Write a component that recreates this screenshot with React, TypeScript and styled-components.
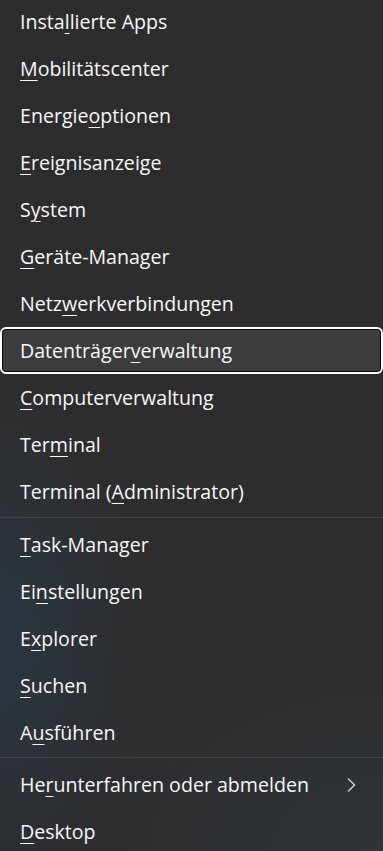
import React from "react";
import styled, { createGlobalStyle } from "styled-components";

const Global = createGlobalStyle`
  html, body { margin: 0; padding: 0; background: #2b2b2b; }
  body { width: 383px; height: 851px; overflow: hidden; }
  #root { width: 383px; height: 851px; }
`;

const Menu = styled.div`
  width: 383px;
  height: 851px;
  overflow: hidden;
  box-sizing: border-box;
  background:
    radial-gradient(ellipse 140px 260px at 0px 640px, rgba(40, 70, 100, 0.35), rgba(40, 70, 100, 0) 100%),
    radial-gradient(ellipse 300px 200px at 383px 851px, rgba(50, 58, 66, 0.5), rgba(50, 58, 66, 0) 100%),
    linear-gradient(180deg, #2c2c2c 0%, #2d2d2d 50%, #2c2d2e 100%);
  font-family: "Open Sans", "Noto Sans", "Liberation Sans", sans-serif;
  color: #f7f7f7;
  display: flex;
  flex-direction: column;
`;

const List = styled.div`
  display: flex;
  flex-direction: column;
  margin-top: -2px;
`;

const Row = styled.div<{ $focused?: boolean }>`
  height: 47px;
  box-sizing: border-box;
  display: flex;
  align-items: center;
  justify-content: space-between;
  padding: 0 26px 0 20px;
  font-size: 19.6px;
  white-space: nowrap;
  border-radius: 6px;
  ${(p) =>
    p.$focused
      ? `
    background: #3c3c3c;
    border: 2px solid #ffffff;
    box-shadow: inset 0 0 0 1px #0c0c0c;
    padding-left: 18px;
  `
      : ""}
`;

const Label = styled.span`
  u {
    text-decoration-thickness: 1.3px;
    text-underline-offset: 4px;
  }
`;

const Separator = styled.div<{ $top: number; $bottom: number }>`
  height: 1px;
  background: #474747;
  margin: ${(p) => p.$top}px 0 ${(p) => p.$bottom}px 0;
`;

const Chevron = styled.svg`
  width: 10px;
  height: 14px;
  display: block;
`;

type Item = { pre: string; key: string; post: string; sub?: boolean; focused?: boolean };

const group1: Item[] = [
  { pre: "Insta", key: "l", post: "lierte Apps" },
  { pre: "", key: "M", post: "obilitätscenter" },
  { pre: "Energie", key: "o", post: "ptionen" },
  { pre: "", key: "E", post: "reignisanzeige" },
  { pre: "S", key: "y", post: "stem" },
  { pre: "", key: "G", post: "eräte-Manager" },
  { pre: "Netz", key: "w", post: "erkverbindungen" },
  { pre: "Datenträger", key: "v", post: "erwaltung", focused: true },
  { pre: "", key: "C", post: "omputerverwaltung" },
  { pre: "Ter", key: "m", post: "inal" },
  { pre: "Terminal (", key: "A", post: "dministrator)" },
];

const group2: Item[] = [
  { pre: "", key: "T", post: "ask-Manager" },
  { pre: "Ei", key: "n", post: "stellungen" },
  { pre: "E", key: "x", post: "plorer" },
  { pre: "", key: "S", post: "uchen" },
  { pre: "A", key: "u", post: "sführen" },
];

const group3: Item[] = [
  { pre: "He", key: "r", post: "unterfahren oder abmelden", sub: true },
  { pre: "", key: "D", post: "esktop" },
];

function MenuRow({ item }: { item: Item }) {
  return (
    <Row $focused={item.focused}>
      <Label>
        {item.pre}
        <u>{item.key}</u>
        {item.post}
      </Label>
      {item.sub && (
        <Chevron viewBox="0 0 10 14">
          <path d="M1.5 1 L7.5 7 L1.5 13" fill="none" stroke="#cfcfcf" strokeWidth="1.5" strokeLinecap="round" strokeLinejoin="round" />
        </Chevron>
      )}
    </Row>
  );
}

export default function App() {
  return (
    <>
      <Global />
      <Menu>
        <List>
          {group1.map((it, i) => (
            <MenuRow key={"a" + i} item={it} />
          ))}
          <Separator $top={2} $bottom={3} />
          {group2.map((it, i) => (
            <MenuRow key={"b" + i} item={it} />
          ))}
          <Separator $top={1} $bottom={3} />
          {group3.map((it, i) => (
            <MenuRow key={"c" + i} item={it} />
          ))}
        </List>
      </Menu>
    </>
  );
}
